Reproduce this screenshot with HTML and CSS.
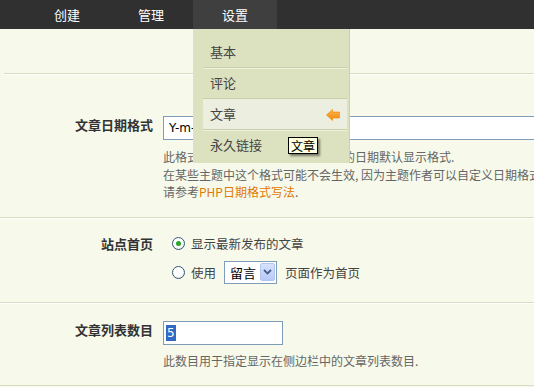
FILE: index.html
```html
<!DOCTYPE html>
<html>
<head>
    <title>设置 - 文章</title>
    <link rel="stylesheet" href="styles.css">
</head>
<body>

    <div class="topbar">
        <ul class="nav">
            <li>创建</li>
            <li>管理</li>
            <li class="active">设置
                <ul class="dropdown">
                    <li>基本</li>
                    <li>评论</li>
                    <li class="current">文章
                        <svg class="arrow" width="14" height="12" viewBox="0 0 14 12">
                            <defs>
                                <linearGradient id="ag" x1="0" y1="0" x2="0" y2="1">
                                    <stop offset="0" stop-color="#ffb347"/>
                                    <stop offset="1" stop-color="#f08a10"/>
                                </linearGradient>
                            </defs>
                            <path d="M0.5 6 L6.5 0.5 L6.5 3 L13.5 3 L13.5 9 L6.5 9 L6.5 11.5 Z" fill="url(#ag)" stroke="#e8860c" stroke-width="0.6"/>
                        </svg>
                    </li>
                    <li>永久链接</li>
                </ul>
                <span class="tooltip">文章</span>
            </li>
        </ul>
    </div>

    <div class="page">
        <div class="intro"></div>

        <div class="row row-date">
            <label class="row-label">文章日期格式</label>
            <div class="row-field">
                <input type="text" class="text wide" value="Y-m-d">
                <p class="desc">
                    此格式用于指定显示在文章归档中的日期默认显示格式.<br>
                    在某些主题中这个格式可能不会生效, 因为主题作者可以自定义日期格式.<br>
                    请参考<a href="#">PHP日期格式写法</a>.
                </p>
            </div>
        </div>

        <div class="row row-front">
            <label class="row-label">站点首页</label>
            <div class="row-field">
                <div class="choice">
                    <span class="radio checked"></span>
                    <span>显示最新发布的文章</span>
                </div>
                <div class="choice">
                    <span class="radio"></span>
                    <span>使用</span>
                    <span class="select">
                        <span class="select-value">留言</span>
                        <span class="select-btn">
                            <svg width="9" height="6" viewBox="0 0 9 6"><path d="M1 1 L4.5 4.5 L8 1" fill="none" stroke="#4a5f8a" stroke-width="1.8"/></svg>
                        </span>
                    </span>
                    <span>页面作为首页</span>
                </div>
            </div>
        </div>

        <div class="row row-count">
            <label class="row-label">文章列表数目</label>
            <div class="row-field">
                <div class="text short"><span class="sel">5</span></div>
                <p class="desc">此数目用于指定显示在侧边栏中的文章列表数目.</p>
            </div>
        </div>
    </div>

</body>
</html>
```

FILE: styles.css
```css
body {
    margin: 0;
    background: #f7f9ea;
    font-family: "Noto Sans CJK SC", "DejaVu Sans", sans-serif;
    color: #333;
    overflow: hidden;
}

/* top navigation */
.topbar {
    height: 29px;
    background: #303030;
    position: relative;
    z-index: 5;
}

.nav {
    list-style: none;
    margin: 0;
    padding: 0 0 0 25px;
    display: flex;
}

.nav > li {
    width: 84px;
    height: 29px;
    line-height: 29px;
    text-align: center;
    color: #fff;
    font-size: 13px;
    position: relative;
}

.nav > li.active {
    background: #3f3f3f;
}

.dropdown {
    position: absolute;
    top: 29px;
    left: 0;
    width: 144px;
    list-style: none;
    margin: 0;
    padding: 8px 2px 3px 10px;
    background: #dce1bf;
    border-right: 1px solid #cbd1aa;
    text-align: left;
}

.dropdown li {
    height: 30px;
    line-height: 30px;
    padding-left: 7px;
    color: #444;
    font-size: 13px;
    border-bottom: 1px solid #c9d0a7;
    box-shadow: 0 1px 0 #eef0e0;
    position: relative;
}

.dropdown li:last-child {
    border-bottom: none;
    box-shadow: none;
}

.dropdown li.current {
    background: #ecefdf;
}

.arrow {
    position: absolute;
    right: 7px;
    top: 10px;
}

.tooltip {
    position: absolute;
    left: 95px;
    top: 137px;
    height: 15px;
    line-height: 15px;
    padding: 0 2px;
    white-space: nowrap;
    background: #ffffe1;
    border: 1px solid #000;
    color: #000;
    font-size: 12px;
    box-shadow: 2px 2px 2px rgba(0, 0, 0, 0.45);
}

/* settings rows */
.intro {
    height: 44px;
    margin-left: 4px;
    border-bottom: 1px solid #d8ddc2;
    box-shadow: 0 1px 0 #fff;
}

.row {
    display: grid;
    grid-template-columns: 153px 1fr;
    column-gap: 10px;
    border-bottom: 1px solid #d8ddc2;
    box-shadow: 0 1px 0 #fff;
}

.row-label {
    text-align: right;
    font-size: 13px;
    font-weight: bold;
    line-height: 18px;
    color: #333;
}

.row-date {
    padding: 42px 0 16px;
}

.row-front {
    padding: 11px 0 15px;
}

.row-front .row-label {
    line-height: 29px;
}

.row-count {
    padding: 18px 0 16px;
}

.text {
    box-sizing: border-box;
    height: 24px;
    border: 1px solid #7f9db9;
    background: #fff;
    font-family: "DejaVu Sans", sans-serif;
    font-size: 12px;
    color: #000;
    padding: 0 5px;
    margin: 0;
    display: block;
    outline: none;
}

.wide {
    width: 420px;
}

.short {
    width: 120px;
    line-height: 22px;
    padding: 0 2px;
}

.sel {
    background: #316ac5;
    color: #fff;
    padding: 1px 1px;
}

.desc {
    margin: 8px 0 0;
    font-size: 12px;
    line-height: 17.5px;
    color: #666;
}

.row-count .desc {
    margin-top: 7px;
}

.desc a {
    color: #e07a00;
    text-decoration: none;
}

.choice {
    display: flex;
    align-items: center;
    gap: 6px;
    height: 29px;
    font-size: 12.5px;
    color: #444;
}

.radio {
    width: 11px;
    height: 11px;
    border-radius: 50%;
    border: 1px solid #35587a;
    background: radial-gradient(circle at 40% 35%, #fff 40%, #dfe3e8 100%);
    margin-left: 9px;
    position: relative;
}

.radio.checked::after {
    content: "";
    position: absolute;
    left: 3px;
    top: 3px;
    width: 5px;
    height: 5px;
    border-radius: 50%;
    background: #2aa52a;
}

.select {
    display: flex;
    align-items: center;
    box-sizing: border-box;
    width: 53px;
    height: 23px;
    border: 1px solid #7f9db9;
    background: #fff;
    margin: 0 2px;
    padding: 0 1px 0 5px;
    color: #000;
    font-size: 13px;
}

.select-value {
    flex: 1;
}

.select-btn {
    display: flex;
    align-items: center;
    justify-content: center;
    width: 15px;
    height: 18px;
    background: linear-gradient(#d6e2fd, #b7caf7);
    border: 1px solid #b3c5ef;
    border-radius: 2px;
    box-sizing: border-box;
}
```
